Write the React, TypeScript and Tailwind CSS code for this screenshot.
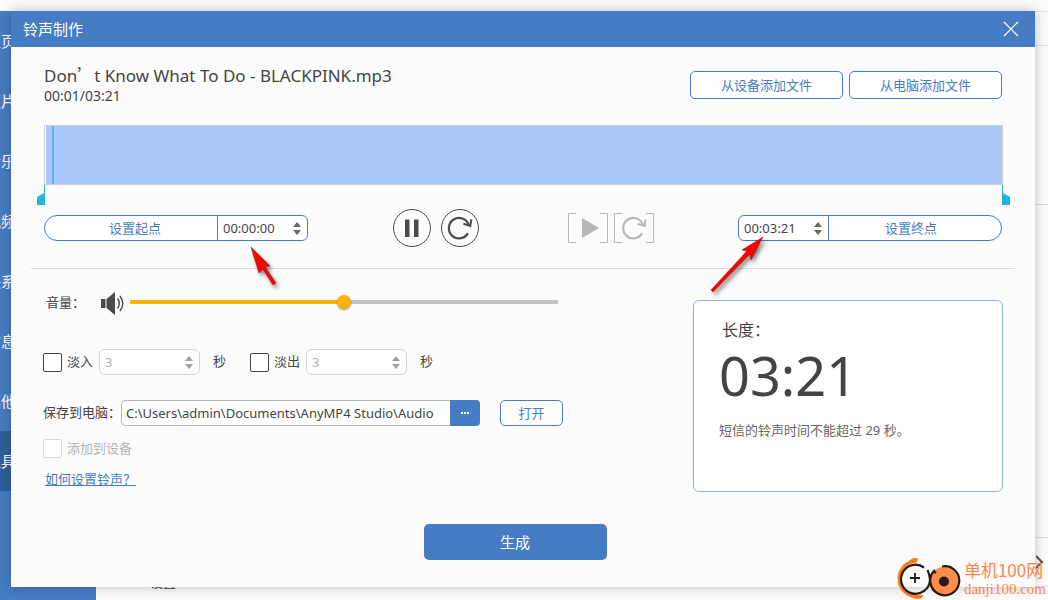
import React, { useState } from 'react';
import clsx from 'clsx';

const NAV_ITEMS = ['主页', '照片', '音乐', '视频', '联系人', '信息', '其他', '工具'];

interface SpinnerProps {
  label: string;
  value: string;
  onChange: (value: string) => void;
  onStep: (delta: number) => void;
  disabled?: boolean;
  className?: string;
}

const pad = (n: number) => String(n).padStart(2, '0');

const shiftTime = (time: string, delta: number) => {
  const [h, m, s] = time.split(':').map(Number);
  const total = Math.max(0, h * 3600 + m * 60 + s + delta);
  return [Math.floor(total / 3600), Math.floor((total % 3600) / 60), total % 60].map(pad).join(':');
};

export default function App() {
  return (
    <div
      lang="zh-CN"
      className="grid min-h-screen overflow-hidden bg-[#fcfcfc] font-['Noto_Sans','Noto_Sans_CJK_SC',sans-serif] text-[13px] text-[#444]"
    >
      <Backdrop />
      <RingtoneDialog />
      <Watermark />
    </div>
  );
}

const Backdrop = () => {
  return (
    <div className="col-start-1 row-start-1 flex overflow-hidden pt-[11px]">
      <nav className="w-24 bg-[#467cc4] text-[15px] text-white">
        {NAV_ITEMS.map((item) => (
          <a
            key={item}
            href="#"
            className={clsx(
              'flex h-[60px] items-center overflow-hidden whitespace-nowrap',
              item === '工具' && 'bg-[#2f5f9e]'
            )}
          >
            <span className="-ml-3.5">{item}</span>
          </a>
        ))}
      </nav>
      <div className="flex-1">
        <div className="h-[35px] border-y border-[#e2e2e2]" />
        <div className="h-[159px] border-b border-[#dcdcdc]" />
        <div className="h-[333px] border-b border-[#dcdcdc]" />
        <div className="flex h-[49px] items-center justify-between border-b border-[#dcdcdc] pl-[54px]">
          <p className="-mb-1 self-end leading-4">设置</p>
          <button type="button" aria-label="下一页" className="h-5 w-3">
            <svg viewBox="0 0 12 20" className="h-5 w-3" fill="none" stroke="#555" strokeWidth="2">
              <path d="M0 4l6 6-6 6" />
            </svg>
          </button>
        </div>
      </div>
    </div>
  );
};

const RingtoneDialog = () => {
  const [start, setStart] = useState('00:00:00');
  const [end, setEnd] = useState('00:03:21');

  return (
    <div
      role="dialog"
      aria-labelledby="dialog-title"
      className="z-10 col-start-1 row-start-1 mt-[11px] mr-[13px] mb-[13px] ml-[11px] self-start bg-[#fcfcfc] shadow-[0_0_12px_rgba(0,0,0,0.25)]"
    >
      <header className="flex h-9 items-center justify-between bg-[#467cc4] px-3 text-white">
        <h1 id="dialog-title" className="text-[15px]">
          铃声制作
        </h1>
        <button type="button" aria-label="关闭" className="p-1">
          <svg viewBox="0 0 16 16" className="size-4" fill="none" stroke="currentColor" strokeWidth="1.2">
            <path d="M1 1l14 14M15 1L1 15" />
          </svg>
        </button>
      </header>
      <main className="px-[33px] pt-4 pb-[27px]">
        <div className="flex h-11 items-center justify-between">
          <div className="self-start">
            <h2 className="text-[17px] leading-6">
              Don<span className="font-['Noto_Sans_CJK_SC']">’</span>t Know What To Do - BLACKPINK.mp3
            </h2>
            <p className="text-sm leading-4">00:01/03:21</p>
          </div>
          <div className="flex gap-1.5">
            <OutlineButton className="h-7 w-[153px]">从设备添加文件</OutlineButton>
            <OutlineButton className="h-7 w-[153px]">从电脑添加文件</OutlineButton>
          </div>
        </div>
        <Waveform />
        <div className="mt-1 flex items-center justify-between">
          <div className="relative flex h-[26px] w-[264px] rounded-l-[13px] rounded-r-md border border-[#467cc4] bg-white">
            <button type="button" className="flex-1 pt-0.5 pl-2 text-[#467cc4]">
              设置起点
            </button>
            <Spinner
              label="起点"
              value={start}
              onChange={setStart}
              onStep={(d) => setStart(shiftTime(start, d))}
              className="w-[90px] border-l border-[#467cc4]"
            />
            <StartArrow />
          </div>
          <div className="flex items-center gap-[89px]">
            <PlayerButtons />
            <SelectionButtons />
          </div>
          <div className="relative flex h-[26px] w-[264px] rounded-l-md rounded-r-[13px] border border-[#467cc4] bg-white">
            <Spinner
              label="终点"
              value={end}
              onChange={setEnd}
              onStep={(d) => setEnd(shiftTime(end, d))}
              className="w-[90px] border-r border-[#467cc4]"
            />
            <button type="button" className="flex-1 pt-0.5 pr-2 text-[#467cc4]">
              设置终点
            </button>
            <EndArrow />
          </div>
        </div>
        <hr className="-mx-[13px] mt-[21px] border-[#dcdcdc]" />
        <div className="-mr-px flex items-start justify-between pt-5">
          <Settings />
          <section className="mt-[11px] h-48 w-[310px] rounded-md border border-[#8fb0df] bg-white px-[25px] pt-[17px]">
            <h3 className="pl-[3px] text-base leading-6">长度：</h3>
            <p className="text-[54px] leading-[66px]">03:21</p>
            <p className="mt-3 leading-5 text-[#666]">短信的铃声时间不能超过 29 秒。</p>
          </section>
        </div>
        <div className="mt-8 flex justify-center pr-4">
          <button type="button" className="h-9 w-[183px] rounded-[5px] bg-[#467cc4] text-[15px] text-white">
            生成
          </button>
        </div>
      </main>
    </div>
  );
};

const Waveform = () => {
  return (
    <div className="mt-[18px] -mr-px">
      <div className="flex h-[60px] border border-[#cfcfcf] bg-white pl-px">
        <div className="flex-1 bg-[#acc8f8] pl-1.5">
          <div className="h-full w-0.5 bg-[#5ab4e6]" />
        </div>
      </div>
      <div className="-mx-[7px] flex justify-between">
        <svg viewBox="0 0 8 20" className="h-5 w-2" fill="#20b8d6">
          <path d="M7 0h1v20H0v-8l7-4z" />
        </svg>
        <svg viewBox="0 0 8 20" className="h-5 w-2" fill="#20b8d6">
          <path d="M1 0H0v20h8v-8L1 8z" />
        </svg>
      </div>
    </div>
  );
};

const Settings = () => {
  const [volume, setVolume] = useState(50);
  const [path, setPath] = useState('C:\\Users\\admin\\Documents\\AnyMP4 Studio\\Audio');

  return (
    <section className="-ml-px w-[520px]">
      <div className="flex h-7 items-center pr-[5px] pl-[3px]">
        <label htmlFor="volume" className="w-[54px]">
          音量：
        </label>
        <SpeakerIcon />
        <input
          id="volume"
          type="range"
          min={0}
          max={100}
          value={volume}
          onChange={(e) => setVolume(Number(e.target.value))}
          className="mb-0.5 ml-1.5 h-1 flex-1 appearance-none [&::-webkit-slider-thumb]:size-3.5 [&::-webkit-slider-thumb]:appearance-none [&::-webkit-slider-thumb]:rounded-full [&::-webkit-slider-thumb]:bg-[#fcb00c] [&::-webkit-slider-thumb]:shadow-[0_1px_2px_rgba(0,0,0,0.4)]"
          style={{ background: `linear-gradient(to right, #fcb00c ${volume}%, #c4c4c4 ${volume}%)` }}
        />
      </div>
      <div className="mt-8 flex gap-6">
        <Fade id="fade-in" label="淡入" />
        <Fade id="fade-out" label="淡出" />
      </div>
      <div className="mt-[25px] flex h-[26px] items-center">
        <label htmlFor="path" className="w-[78px] whitespace-nowrap">
          保存到电脑：
        </label>
        <input
          id="path"
          value={path}
          onChange={(e) => setPath(e.target.value)}
          className="h-[26px] w-[329px] rounded-l-[5px] border border-r-0 border-[#b4b4b4] bg-white px-1"
        />
        <button
          type="button"
          aria-label="浏览"
          className="flex h-[26px] w-[30px] items-center justify-center gap-px rounded-r-[4px] bg-[#467cc4]"
        >
          <span className="size-0.5 bg-white" />
          <span className="size-0.5 bg-white" />
          <span className="size-0.5 bg-white" />
        </button>
        <OutlineButton className="ml-5 h-[26px] w-[63px]">打开</OutlineButton>
      </div>
      <div className="mt-3 flex items-center gap-[5px]">
        <Checkbox id="to-device" disabled />
        <label htmlFor="to-device" className="leading-5 text-[#b4b4b4]">
          添加到设备
        </label>
      </div>
      <a href="#" className="mt-[11px] ml-0.5 inline-block leading-5 text-[#467cc4] underline">
        如何设置铃声？
      </a>
    </section>
  );
};

const Fade = ({ id, label }: { id: string; label: string }) => {
  const [enabled, setEnabled] = useState(false);
  const [seconds, setSeconds] = useState('3');

  return (
    <div className="flex items-center">
      <Checkbox id={id} checked={enabled} onChange={(e) => setEnabled(e.target.checked)} />
      <label htmlFor={id} className="ml-[5px]">
        {label}
      </label>
      <Spinner
        label={`${label}秒数`}
        value={seconds}
        onChange={setSeconds}
        onStep={(d) => setSeconds(String(Math.max(0, Number(seconds) + d)))}
        disabled={!enabled}
        className="ml-1.5 h-[26px] w-[101px] rounded-md border border-[#d4d4d4] bg-white"
      />
      <span className="ml-[13px]">秒</span>
    </div>
  );
};

const Checkbox = (props: React.InputHTMLAttributes<HTMLInputElement>) => {
  return (
    <input
      type="checkbox"
      className="size-[19px] appearance-none rounded-[2px] border border-[#444] bg-white checked:bg-[#467cc4] disabled:border-[#dcdcdc]"
      {...props}
    />
  );
};

const Spinner = ({ label, value, onChange, onStep, disabled, className }: SpinnerProps) => {
  return (
    <div className={clsx('flex items-center pr-1.5', disabled ? 'text-[#b4b4b4]' : 'text-[#444]', className)}>
      <input
        aria-label={label}
        value={value}
        disabled={disabled}
        onChange={(e) => onChange(e.target.value)}
        className="h-6 w-0 flex-1 pl-[5px]"
      />
      <div className={clsx('flex flex-col gap-[3px]', disabled ? 'text-[#a0a0a0]' : 'text-[#666]')}>
        <button type="button" aria-label={`${label}增加`} disabled={disabled} onClick={() => onStep(1)}>
          <svg viewBox="0 0 8 5" className="h-[5px] w-2" fill="currentColor">
            <path d="M0 5l4-5 4 5z" />
          </svg>
        </button>
        <button type="button" aria-label={`${label}减少`} disabled={disabled} onClick={() => onStep(-1)}>
          <svg viewBox="0 0 8 5" className="h-[5px] w-2" fill="currentColor">
            <path d="M0 0l4 5 4-5z" />
          </svg>
        </button>
      </div>
    </div>
  );
};

const OutlineButton = ({ className, children }: { className?: string; children: React.ReactNode }) => {
  return (
    <button
      type="button"
      className={clsx('rounded-[5px] border border-[#467cc4] bg-white pt-0.5 text-[#467cc4]', className)}
    >
      {children}
    </button>
  );
};

const PlayerButtons = () => {
  return (
    <div className="flex gap-2.5">
      <button type="button" aria-label="暂停" className="size-[38px]">
        <svg viewBox="0 0 38 38" className="size-[38px]" fill="none" stroke="#4a4a4a">
          <circle cx="19" cy="19" r="18.5" />
          <path d="M12 10.500h4.500v17.500H12zM21 10.500h4.500v17.500H21z" fill="#4a4a4a" stroke="none" />
        </svg>
      </button>
      <button type="button" aria-label="重新播放" className="size-[38px]">
        <svg viewBox="0 0 38 38" className="size-[38px]" fill="none" stroke="#4a4a4a">
          <circle cx="19" cy="19" r="18.5" />
          <ReplayMark />
        </svg>
      </button>
    </div>
  );
};

const SelectionButtons = () => {
  return (
    <div className="flex gap-1.5">
      <button type="button" aria-label="播放选区" disabled className="h-[30px] w-10">
        <svg viewBox="0 0 40 30" className="h-[30px] w-10" fill="none" stroke="#b8b8b8">
          <path d="M8 .5H.5v29H8M32 .5h7.5v29H32" />
          <path d="M14 5l17 10-17 10z" fill="#b8b8b8" stroke="none" />
        </svg>
      </button>
      <button type="button" aria-label="重播选区" disabled className="h-[30px] w-10">
        <svg viewBox="0 0 40 30" className="h-[30px] w-10" fill="none" stroke="#b8b8b8">
          <path d="M8 .5H.5v29H8M32 .5h7.5v29H32" />
          <g transform="translate(1.3 -4)">
            <ReplayMark />
          </g>
        </svg>
      </button>
    </div>
  );
};

const ReplayMark = () => {
  return (
    <g strokeWidth="2.2">
      <path d="M26.400 25A10.200 10.200 0 1 1 27.600 15.500" strokeLinecap="round" />
      <path d="M22.400 14.800l6.900 2.200 1-6.600" strokeWidth="2" />
    </g>
  );
};

const SpeakerIcon = () => {
  return (
    <svg viewBox="0 0 24 24" className="size-6" fill="#4a4a4a">
      <path d="M1 8h4.5v9H1zM6.5 8L15 1v23l-8.500-7z" />
      <path d="M17.500 7.500q3.600 5 0 10M20 5q5.600 7.500 0 15" fill="none" stroke="#4a4a4a" strokeWidth="1.400" />
    </svg>
  );
};

const StartArrow = () => {
  return (
    <svg
      viewBox="0 0 34 48"
      className="pointer-events-none absolute top-[29px] left-[204px] h-12 w-[34px] drop-shadow-[2px_3px_2px_rgba(0,0,0,0.5)]"
      fill="#f00"
      stroke="#8a1010"
      strokeWidth=".5"
    >
      <path d="M2 2l19 19-5 1 11 16-3 2-10-16-4 4z" />
    </svg>
  );
};

const EndArrow = () => {
  return (
    <svg
      viewBox="0 0 60 64"
      className="pointer-events-none absolute top-[19px] -left-[29px] h-16 w-[60px] drop-shadow-[2px_3px_2px_rgba(0,0,0,0.5)]"
      fill="#f00"
      stroke="#8a1010"
      strokeWidth=".5"
    >
      <path d="M53 2L32 15l5 1L1 55l2 2 37-38 1 6z" />
    </svg>
  );
};

const Watermark = () => {
  return (
    <div className="pointer-events-none z-20 col-start-1 row-start-1 flex items-end gap-[3px] self-end justify-self-end pr-0.5 text-[#ff8646]">
      <svg viewBox="0 0 64 42" className="h-[42px] w-16" fill="none">
        <path
          d="M21 .5C17-1 14 1 12 3 5 6 .5 13 .5 21c0 9 7 17 16 19 4 2 9 1 10-3-13 1-23-6-23-16C3.500 13 9 7 20 4z"
          fill="#ff7a1a"
        />
        <circle cx="47" cy="23.500" r="14.500" fill="#ff8c48" />
        <path
          d="M27 9.500A14.500 14.500 0 1 0 33 22c0-4-1-7-2.500-10M36 13l3 2M38 12A14.500 14.500 0 1 0 45 8.500"
          stroke="#241a17"
          strokeWidth="2.200"
        />
        <circle cx="47" cy="23.500" r="5" fill="#241a17" />
        <path d="M18 15v10M13 20h10" stroke="#241a17" strokeWidth="1.800" />
      </svg>
      <div className="whitespace-nowrap">
        <p className="font-['Noto_Sans_CJK_SC'] text-[17px] leading-[19px]">单机100网</p>
        <p className="font-['Liberation_Serif',serif] text-[15px] leading-[21px]">danji100.com</p>
      </div>
    </div>
  );
};
